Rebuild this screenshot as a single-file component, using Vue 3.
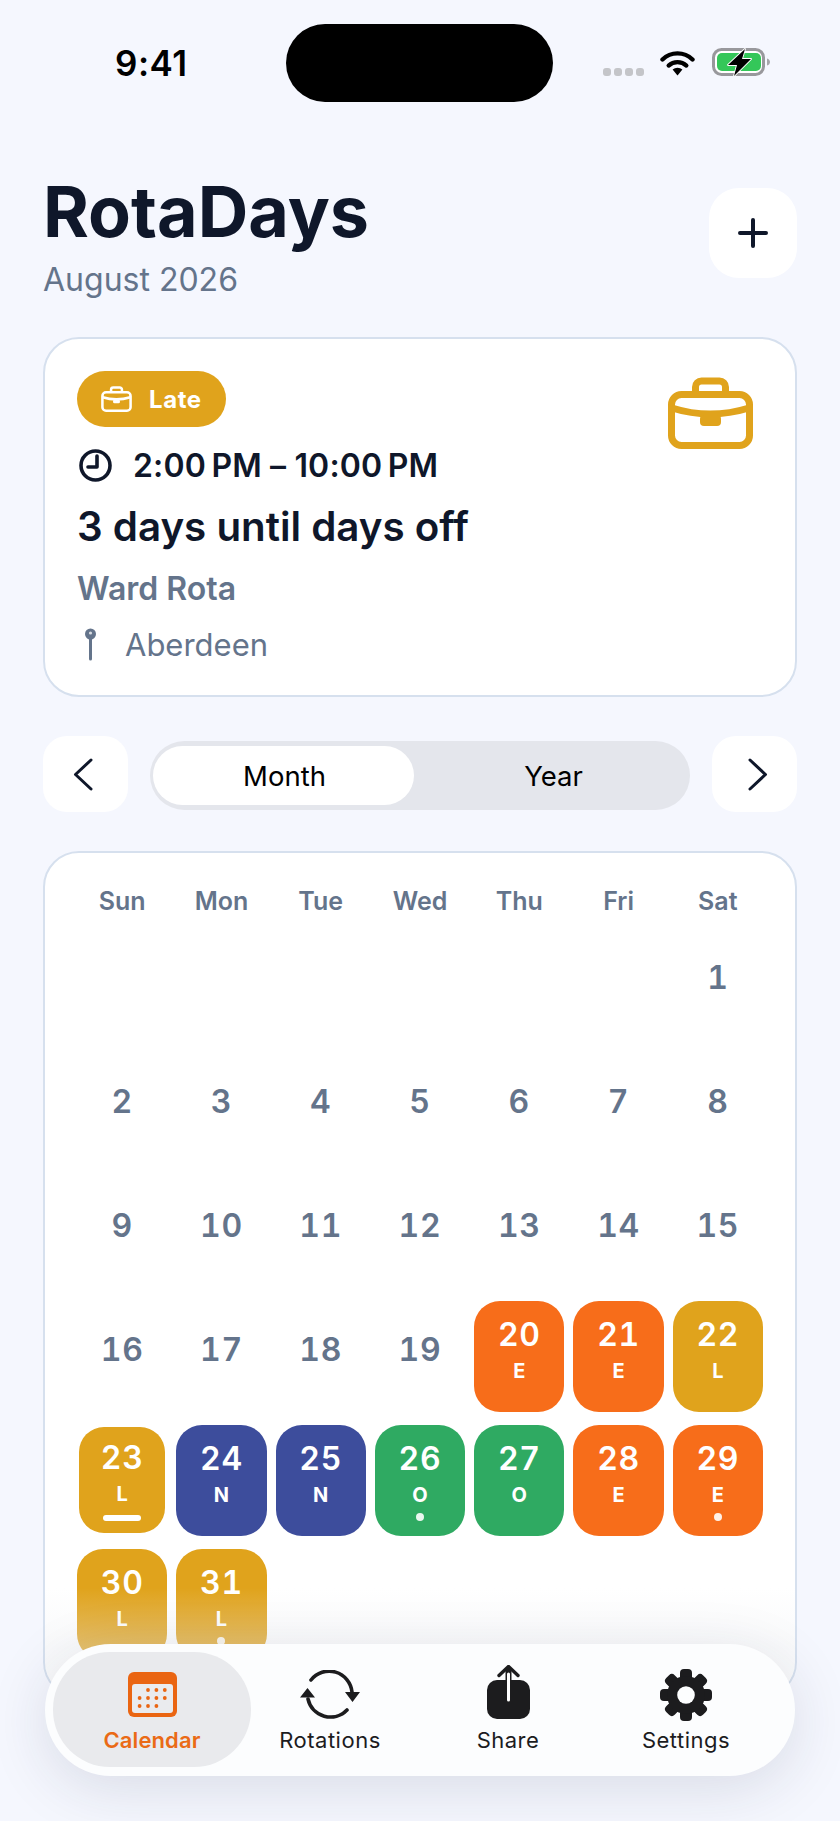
<script setup>
const weekdays = ['Sun', 'Mon', 'Tue', 'Wed', 'Thu', 'Fri', 'Sat']

const shifts = {
  20: { code: 'E', tone: 'early' },
  21: { code: 'E', tone: 'early' },
  22: { code: 'L', tone: 'late' },
  23: { code: 'L', tone: 'late', today: true },
  24: { code: 'N', tone: 'night' },
  25: { code: 'N', tone: 'night' },
  26: { code: 'O', tone: 'off', dot: true },
  27: { code: 'O', tone: 'off' },
  28: { code: 'E', tone: 'early' },
  29: { code: 'E', tone: 'early', dot: true },
  30: { code: 'L', tone: 'late' },
  31: { code: 'L', tone: 'late', dot: true }
}

const days = Array.from({ length: 31 }, (_, i) => ({ n: i + 1, ...(shifts[i + 1] || {}) }))
const blanks = 6

const calDots = [
  [20, 18], [28.4, 18], [36.8, 18],
  [11.6, 26], [20, 26], [28.4, 26], [36.8, 26],
  [11.6, 34], [20, 34], [28.4, 34]
]
const gearTeeth = [0, 45, 90, 135]
</script>

<template>
  <div class="phone">
    <div class="status">
      <span class="clock">9:41</span>
      <div class="island"></div>
      <div class="sys">
        <div class="signal"><i></i><i></i><i></i><i></i></div>
        <svg class="wifi" viewBox="0 0 35 27">
          <path d="M2.5 10.5a21.5 21.5 0 0 1 30 0" fill="none" stroke="#000" stroke-width="4.4" stroke-linecap="round"/>
          <path d="M8.6 16.6a13 13 0 0 1 17.8 0" fill="none" stroke="#000" stroke-width="4.2" stroke-linecap="round"/>
          <path d="M12.6 20.6a7.5 7.5 0 0 1 9.8 0L17.5 26.6Z" fill="#000"/>
        </svg>
        <svg class="battery" viewBox="0 0 58 28">
          <rect x="1.5" y="1.500" width="50" height="25" rx="8" fill="#fff" stroke="#98989c" stroke-width="3"/>
          <rect x="5" y="5" width="44" height="18" rx="5" fill="#34c759"/>
          <path d="M55 10.500c2 .5 3 2 3 3.500s-1 3-3 3.500Z" fill="#a6a6aa"/>
          <path d="M33 1 16 17h9l-3 11 17-17h-9Z" fill="#000" stroke="#fff" stroke-width="1.800" stroke-linejoin="round" paint-order="stroke"/>
        </svg>
      </div>
    </div>

    <main class="content">
      <header class="top">
        <div>
          <h1>RotaDays</h1>
          <p class="month">August 2026</p>
        </div>
        <button class="add">
          <svg viewBox="0 0 30 30" width="30" height="30">
            <path d="M15 2v26M2 15h26" stroke="#0f172a" stroke-width="4" stroke-linecap="round"/>
          </svg>
        </button>
      </header>

      <section class="card today-card">
        <div>
          <div class="pill">
            <svg class="pill-icon" viewBox="0 0 85 72" fill="none" stroke="#fff" stroke-width="7">
              <rect x="3.5" y="17.5" width="78" height="51" rx="10"/>
              <path d="M27.5 17V10a6 6 0 0 1 6-6h18a6 6 0 0 1 6 6v7"/>
              <path d="M4 31q38 12 77 0"/>
              <rect x="33" y="38" width="19" height="10" rx="4" fill="#fff" stroke="none"/>
            </svg>
            <span>Late</span>
          </div>
          <div class="hours">
            <svg viewBox="0 0 33 33" width="33" height="33" fill="none" stroke="#0f172a" stroke-width="3.6" stroke-linecap="round" stroke-linejoin="round">
              <circle cx="16.5" cy="16.5" r="14.5"/>
              <path d="M18 7v11H9"/>
            </svg>
            <span>2:00&#8201;PM – 10:00&#8201;PM</span>
          </div>
          <h2>3 days until days off</h2>
          <p class="rota">Ward Rota</p>
          <div class="place">
            <svg viewBox="0 0 13 33" width="13" height="33">
              <path d="M6.5 10v21" stroke="#64748b" stroke-width="3" stroke-linecap="round"/>
              <circle cx="6.5" cy="6" r="5.5" fill="#64748b"/>
              <circle cx="6.5" cy="5" r="1.6" fill="#fff" opacity=".75"/>
            </svg>
            <span>Aberdeen</span>
          </div>
        </div>
        <svg class="case" viewBox="0 0 85 72" fill="none" stroke="#e0a31c" stroke-width="7">
          <rect x="3.5" y="17.5" width="78" height="51" rx="10"/>
          <path d="M27.5 17V10a6 6 0 0 1 6-6h18a6 6 0 0 1 6 6v7"/>
          <path d="M4 31q38 12 77 0"/>
          <rect x="32" y="38" width="21" height="11" rx="4" fill="#e0a31c" stroke="none"/>
        </svg>
      </section>

      <div class="controls">
        <button class="nav-btn">
          <svg class="prev" viewBox="0 0 20 33" width="20" height="33" fill="none" stroke="#0f172a" stroke-width="3" stroke-linecap="round" stroke-linejoin="round">
            <path d="M18 2 2.5 16.5 18 31"/>
          </svg>
        </button>
        <div class="segment">
          <span class="seg on">Month</span>
          <span class="seg">Year</span>
        </div>
        <button class="nav-btn">
          <svg class="next" viewBox="0 0 20 33" width="20" height="33" fill="none" stroke="#0f172a" stroke-width="3" stroke-linecap="round" stroke-linejoin="round">
            <path d="M2 2 17.5 16.5 2 31"/>
          </svg>
        </button>
      </div>

      <section class="card calendar">
        <div class="weekdays">
          <span v-for="w in weekdays" :key="w">{{ w }}</span>
        </div>
        <div class="grid">
          <div v-for="b in blanks" :key="'b' + b"></div>
          <div
            v-for="d in days"
            :key="d.n"
            class="day"
            :class="[d.tone, { shift: d.code, today: d.today }]"
          >
            <span class="num">{{ d.n }}</span>
            <span v-if="d.code" class="code">{{ d.code }}</span>
            <i v-if="d.dot" class="dot"></i>
            <i v-if="d.today" class="bar"></i>
          </div>
        </div>
      </section>
    </main>

    <nav class="tabs">
      <div class="tab active">
        <div class="tab-icon">
          <svg class="i-cal" viewBox="0 0 49 45" width="49" height="45">
            <rect width="49" height="45" rx="6" fill="#ea6512"/>
            <rect x="4" y="12" width="41" height="29" rx="3" fill="#eaebee"/>
            <circle v-for="(p, i) in calDots" :key="i" :cx="p[0]" :cy="p[1]" r="1.9" fill="#ea6512"/>
          </svg>
        </div>
        <span>Calendar</span>
      </div>
      <div class="tab">
        <div class="tab-icon">
          <svg class="i-rot" viewBox="0 0 60 49" width="60" height="49" fill="#1c1c1e">
            <path d="M11 10A23 23 0 0 1 52 22M47 40A23 23 0 0 1 8 29" fill="none" stroke="#1c1c1e" stroke-width="3.6" stroke-linecap="round"/>
            <path d="M45 22h15l-7.500 10ZM0 27.500h15L7.500 18Z"/>
          </svg>
        </div>
        <span>Rotations</span>
      </div>
      <div class="tab">
        <div class="tab-icon">
          <svg class="i-share" viewBox="0 0 43 54" width="43" height="54" fill="none">
            <rect y="15" width="43" height="39" rx="10" fill="#1c1c1e"/>
            <path d="M12 10.500 21.500 1.500 31 10.500" stroke="#1c1c1e" stroke-width="3.400" stroke-linecap="round" stroke-linejoin="round"/>
            <path d="M21.500 3v13" stroke="#1c1c1e" stroke-width="6"/>
            <path d="M21.500 9v26" stroke="#fff" stroke-width="3" stroke-linecap="round"/>
          </svg>
        </div>
        <span>Share</span>
      </div>
      <div class="tab">
        <div class="tab-icon">
          <svg class="i-gear" viewBox="0 0 52 52" width="52" height="52" fill="#1c1c1e">
            <rect v-for="a in gearTeeth" :key="a" x="20" width="12" height="52" rx="4" :transform="`rotate(${a} 26 26)`"/>
            <circle cx="26" cy="26" r="19"/>
            <circle cx="26" cy="26" r="8.800" fill="#fdfeff"/>
          </svg>
        </div>
        <span>Settings</span>
      </div>
    </nav>
  </div>
</template>

<style>
body {
  background: #f5f7fe;
}
</style>

<style scoped>
.phone {
  position: relative;
  width: 840px;
  height: 1821px;
  overflow: hidden;
  background: #f5f7fe;
  font-family: Inter, "Liberation Sans", sans-serif;
  color: #0f172a;
}

.status {
  display: flex;
  align-items: flex-start;
  padding: 24px 0 0 115px;
  height: 78px;
}

.clock {
  width: 171px;
  margin-top: 19px;
  font-size: 35px;
  line-height: 40px;
  font-weight: 600;
  letter-spacing: .5px;
  color: #000;
}

.island {
  width: 267px;
  height: 78px;
  border-radius: 39px;
  background: #000;
}

.sys {
  display: flex;
  align-items: flex-end;
  height: 28px;
  margin: 24px 0 0 50px;
}

.signal {
  display: flex;
  gap: 3px;
  width: 57px;
}

.signal i {
  width: 8px;
  height: 8px;
  border-radius: 3px;
  background: #c4c5c9;
}

.wifi {
  width: 35px;
  height: 27px;
  margin-right: 17px;
}

.battery {
  width: 58px;
  height: 28px;
}

.content {
  padding: 0 43px;
}

.top {
  display: flex;
  justify-content: space-between;
  align-items: flex-start;
  height: 149px;
  margin-top: 86px;
}

h1 {
  margin: -14px 0 0;
  font-size: 70px;
  line-height: 76px;
  font-weight: 700;
  color: #0f172a;
}

.month {
  margin: 11px 0 0;
  font-size: 32px;
  line-height: 38px;
  color: #64748b;
}

button {
  border: 0;
  padding: 0;
  background: #fff;
  display: flex;
  align-items: center;
  justify-content: center;
}

.add {
  width: 88px;
  height: 90px;
  border-radius: 30px;
}

.card {
  background: #fff;
  border: 2px solid #d6e0ee;
  border-radius: 36px;
}

.today-card {
  display: flex;
  justify-content: space-between;
  padding: 32px 42px 32px 32px;
}

.case {
  width: 85px;
  height: 72px;
  margin-top: 6px;
}

.pill {
  display: inline-flex;
  align-items: center;
  gap: 17px;
  height: 56px;
  padding: 0 24px 0 24px;
  border-radius: 28px;
  background: #e0a31c;
  color: #fff;
  font-size: 24px;
  font-weight: 700;
  letter-spacing: .6px;
}

.pill-icon {
  width: 31px;
  height: 26px;
}

.hours {
  display: flex;
  align-items: center;
  gap: 21px;
  height: 34px;
  margin-top: 21px;
  margin-left: 2px;
  font-size: 32px;
  font-weight: 600;
  letter-spacing: .15px;
}

h2 {
  margin: 21px 0 0;
  font-size: 40.3px;
  line-height: 48px;
  font-weight: 600;
}

.rota {
  margin: 19px 0 0;
  font-size: 32px;
  line-height: 38px;
  font-weight: 600;
  color: #64748b;
}

.place {
  display: flex;
  align-items: center;
  gap: 28px;
  height: 38px;
  margin: 17px 0 0 7px;
  font-size: 31px;
  color: #64748b;
}

.controls {
  display: flex;
  align-items: center;
  gap: 22px;
  margin: 39px 0;
}

.nav-btn {
  flex: none;
  width: 85px;
  height: 76px;
  border-radius: 24px;
}

.prev {
  margin-right: 5px;
}

.next {
  margin-left: 6px;
}

.segment {
  flex: 1;
  display: flex;
  height: 69px;
  margin-top: 3px;
  padding: 5px 3px;
  box-sizing: border-box;
  border-radius: 35px;
  background: #e4e6ec;
}

.seg {
  flex: 1;
  display: flex;
  align-items: center;
  justify-content: center;
  padding-left: 6px;
  font-size: 27.5px;
  font-weight: 400;
  color: #000;
}

.seg.on {
  flex: none;
  width: 261px;
  padding-left: 2px;
  box-sizing: border-box;
  border-radius: 30px;
  background: #fff;
}

.calendar {
  position: relative;
  overflow: hidden;
  padding: 33px 32px 36px;
}

.calendar::after {
  content: "";
  position: absolute;
  left: 0;
  right: 0;
  bottom: 0;
  height: 108px;
  background: linear-gradient(rgba(238, 240, 244, 0), rgba(238, 240, 244, .36) 55%);
}

.weekdays {
  display: grid;
  grid-template-columns: repeat(7, 1fr);
  column-gap: 9px;
  margin-bottom: 13px;
  text-align: center;
  font-size: 25px;
  line-height: 30px;
  font-weight: 600;
  color: #64748b;
}

.grid {
  display: grid;
  grid-template-columns: repeat(7, 1fr);
  grid-auto-rows: 111px;
  gap: 13px 9px;
}

.day {
  display: flex;
  flex-direction: column;
  align-items: center;
  box-sizing: border-box;
  padding-top: 29px;
  color: #64748b;
}

.num {
  font-size: 32px;
  line-height: 40px;
  font-weight: 600;
  font-variant-numeric: tabular-nums;
  letter-spacing: .7px;
}

.day.shift {
  padding-top: 14px;
  border-radius: 26px;
  color: #fff;
}

.code {
  margin-top: 4px;
  font-size: 20px;
  line-height: 24px;
  font-weight: 700;
}

.dot {
  width: 8px;
  height: 8px;
  margin-top: 6px;
  border-radius: 50%;
  background: #fff;
  opacity: .9;
}

.bar {
  width: 38px;
  height: 6px;
  margin-top: 9px;
  border-radius: 3px;
  background: #fff;
}

.day.today {
  margin: 2px 2px 3px;
  padding-top: 11px;
  border-radius: 25px;
}

.early {
  background: #f76d1a;
}

.late {
  background: #e0a31c;
}

.night {
  background: #3d4d9c;
}

.off {
  background: #2faa62;
}

.tabs {
  position: absolute;
  left: 45px;
  top: 1644px;
  width: 750px;
  height: 132px;
  box-sizing: border-box;
  padding: 8px 20px 9px 18px;
  display: grid;
  grid-template-columns: repeat(4, 178px);
  border-radius: 66px;
  background: #fcfdfe;
  box-shadow: 0 12px 60px rgba(30, 40, 70, .13);
}

.tab {
  display: flex;
  flex-direction: column;
  align-items: center;
  margin: 0 -10px;
  padding-top: 12px;
  border-radius: 57px;
  font-size: 22px;
  line-height: 28px;
  font-weight: 400;
  letter-spacing: .5px;
  color: #1c1c1e;
}

.tab.active {
  background: #e9eaed;
  color: #ea6a16;
  font-weight: 600;
  letter-spacing: .1px;
}

.tab-icon {
  display: flex;
  align-items: flex-end;
  justify-content: center;
  height: 57px;
  margin-bottom: 5px;
}

.i-cal {
  margin-bottom: 4px;
}

.i-rot,
.i-share {
  margin-bottom: 2px;
}
</style>
